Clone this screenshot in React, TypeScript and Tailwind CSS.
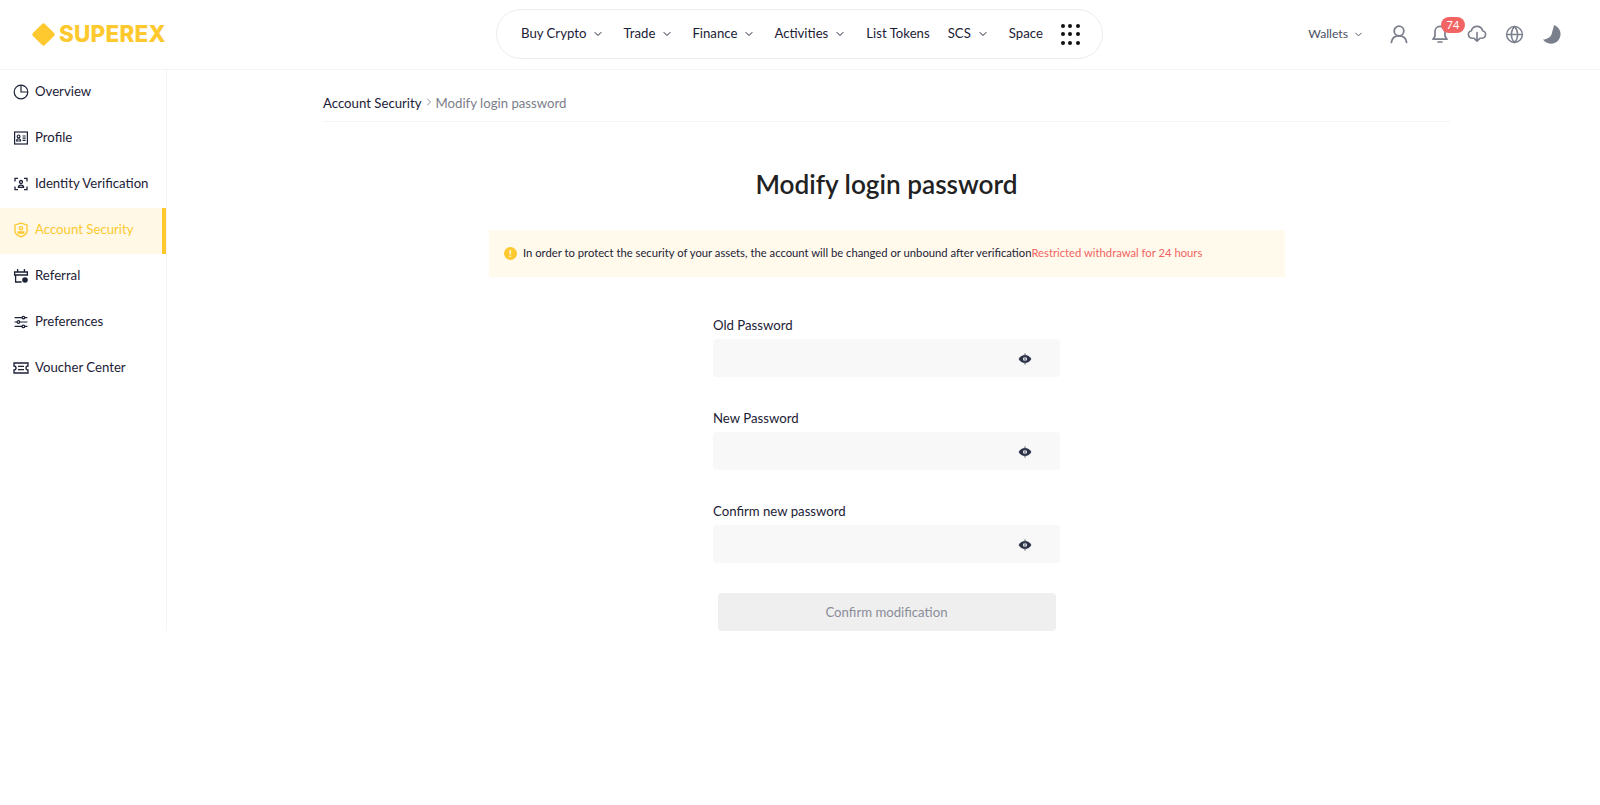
import { ChevronDown, ChevronRight, Globe } from "lucide-react";

const navItems = [
  { label: "Buy Crypto", arrow: true, gap: "mr-[19px]" },
  { label: "Trade", arrow: true, gap: "mr-[19px]" },
  { label: "Finance", arrow: true, gap: "mr-[19px]" },
  { label: "Activities", arrow: true, gap: "mr-[20px]" },
  { label: "List Tokens", arrow: false, gap: "mr-[18px]" },
  { label: "SCS", arrow: true, gap: "mr-[20px]" },
  { label: "Space", arrow: false, gap: "mr-[18px]" },
];

function PieIcon() {
  return (
    <svg width="16" height="16" viewBox="0 0 16 16" fill="none" stroke="currentColor" strokeWidth="1.200">
      <circle cx="8" cy="8" r="6.800" />
      <path d="M8 1.200V8h6.800" />
    </svg>
  );
}

function ProfileIcon() {
  return (
    <svg width="16" height="16" viewBox="0 0 16 16" fill="none" stroke="currentColor" strokeWidth="1.200">
      <rect x="1.600" y="2" width="12.800" height="12" />
      <circle cx="5.600" cy="6.400" r="1.400" />
      <path d="M3.600 11c0-3 4-3 4 0zM9.600 6h3M9.600 8.200h3M9.600 10.400h3" />
    </svg>
  );
}

function IdentityIcon() {
  return (
    <svg width="16" height="16" viewBox="0 0 16 16" fill="none" stroke="currentColor" strokeWidth="1.300">
      <path d="M5 2.400H2v3M11 2.400h3v3M5 13.600H2v-3M11 13.600h3v-3" />
      <circle cx="8" cy="6" r="1.500" />
      <path d="M5.400 11.400c0-3 5.200-3 5.200 0z" />
    </svg>
  );
}

function ShieldIcon() {
  return (
    <svg width="16" height="16" viewBox="0 0 16 16" fill="none" stroke="currentColor" strokeWidth="1.300">
      <path d="M8 1.200l6 1.800v6.200c0 2.600-3.400 4.600-6 5.600-2.600-1-6-3-6-5.600V3z" />
      <circle cx="8" cy="6.200" r="1.600" />
      <path d="M5.200 11.200h5.600V9.800H5.200z" />
    </svg>
  );
}

function ReferralIcon() {
  return (
    <svg width="16" height="16" viewBox="0 0 16 16" fill="none" stroke="currentColor" strokeWidth="1.300">
      <path d="M4.600 1v3M11.400 1v3M1.600 4h12.800v3H1.600zM2.600 7v7h6" />
      <circle cx="12" cy="12" r="2.800" fill="currentColor" stroke="none" />
    </svg>
  );
}

function SlidersIcon() {
  return (
    <svg width="16" height="16" viewBox="0 0 16 16" fill="none" stroke="currentColor" strokeWidth="1.200">
      <path d="M1.600 3.600h12.800M1.600 8h12.800M1.600 12.400h12.800" />
      <circle cx="10.400" cy="3.600" r="1.300" fill="white" />
      <circle cx="5.400" cy="8" r="1.300" fill="white" />
      <circle cx="10.400" cy="12.400" r="1.300" fill="white" />
    </svg>
  );
}

function VoucherIcon() {
  return (
    <svg width="16" height="16" viewBox="0 0 16 16" fill="none" stroke="currentColor" strokeWidth="1.300">
      <path d="M1 3h14v3a2 2 0 0 0 0 4v3H1v-3a2 2 0 0 0 0-4z" />
      <path d="M5 6.400h6M5 9.600h6" />
    </svg>
  );
}

function UserIcon() {
  return (
    <svg width="20" height="20" viewBox="0 0 20 20" fill="none" stroke="currentColor" strokeWidth="1.800" strokeLinecap="round">
      <circle cx="10" cy="7" r="4.800" />
      <path d="M2.400 18.400c.6-4.400 3.600-6.600 7.600-6.600s7 2.200 7.600 6.600" />
    </svg>
  );
}

function BellIcon() {
  return (
    <svg width="20" height="20" viewBox="0 0 20 20" fill="none" stroke="currentColor" strokeWidth="1.700" strokeLinecap="round" strokeLinejoin="round">
      <path d="M10 2.400c-3.200 0-5 2.400-5 5.200v4.600l-2 3h14l-2-3V7.600c0-2.800-1.800-5.200-5-5.200z" />
      <path d="M8 18h4" />
    </svg>
  );
}

function CloudIcon() {
  return (
    <svg width="20" height="20" viewBox="0 0 20 20" fill="none" stroke="currentColor" strokeWidth="1.600" strokeLinecap="round" strokeLinejoin="round">
      <path d="M6.200 14.200H5a3.800 3.800 0 0 1-.6-7.500 5.800 5.800 0 0 1 11.200 0A3.800 3.800 0 0 1 15 14.200h-1.200" />
      <path d="M10 8.600v8.400M7.200 14.400 10 17.200l2.800-2.800" />
    </svg>
  );
}

function MoonIcon() {
  return (
    <svg width="20" height="20" viewBox="0 0 20 20" fill="currentColor">
      <path d="M12 1A9.600 9.600 0 1 1 1 15.500C5 15.500 9 13 9.800 9.500 10.500 6.500 11.500 4 12 1z" />
    </svg>
  );
}

const sideItems = [
  { label: "Overview", icon: <PieIcon /> },
  { label: "Profile", icon: <ProfileIcon /> },
  { label: "Identity Verification", icon: <IdentityIcon /> },
  { label: "Account Security", icon: <ShieldIcon />, active: true },
  { label: "Referral", icon: <ReferralIcon /> },
  { label: "Preferences", icon: <SlidersIcon /> },
  { label: "Voucher Center", icon: <VoucherIcon /> },
];

function EyeIcon() {
  return (
    <svg width="14" height="14" viewBox="0 0 14 14" className="mt-[1px]">
      <path d="M0.600 7C2.200 4.200 4.400 3 7 3s4.800 1.200 6.400 4c-1.600 2.800-3.800 4-6.400 4S2.200 9.800 0.600 7z" fill="#2b3147" />
      <circle cx="7" cy="7" r="2" fill="#f8f8f8" />
      <path d="M7 1.400v11.200" stroke="#4a4f62" strokeWidth="1" />
    </svg>
  );
}

function PasswordField({ label, mb }: { label: string; mb: string }) {
  return (
    <div className={`w-[347px] ${mb}`}>
      <div className="text-[13.200px] leading-[14px] text-[#1c2136] mb-[7px]">{label}</div>
      <div className="h-[38px] rounded-[4px] bg-[#f8f8f8] flex items-center justify-end pr-[28px]">
        <EyeIcon />
      </div>
    </div>
  );
}

export default function App() {
  return (
    <div className="h-[805px] bg-white font-['Lato','Liberation_Sans',sans-serif] overflow-hidden">
      <header className="h-[70px] border-b border-[#f3f3f3] flex items-center pl-[32px] pr-[38px] pb-[1px]">
        <div className="flex items-center w-[464px]">
          <div className="w-[17px] h-[17px] rotate-45 bg-[#fdc92e] rounded-[2px] ml-[3px] mr-[7px]" />
          <span className="font-['Inter',sans-serif] font-extrabold text-[22.500px] tracking-[0.2px] leading-none text-[#fdc92e]">SUPEREX</span>
        </div>
        <nav className="h-[50px] w-[607px] border border-[#ececec] rounded-[25px] flex items-center pl-[24px] text-[13.200px] text-[#1c2136]">
          {navItems.map((item) => (
            <div key={item.label} className={`flex items-center ${item.gap}`}>
              <span>{item.label}</span>
              {item.arrow && <ChevronDown size={12} strokeWidth={2} className="ml-[6px]" />}
            </div>
          ))}
          <div className="grid grid-cols-3 gap-x-[3.500px] gap-y-[4.500px]">
            {Array.from({ length: 9 }).map((_, i) => (
              <span key={i} className="w-[4px] h-[4px] rounded-full bg-[#111]" />
            ))}
          </div>
        </nav>
        <div className="flex-1 flex items-center justify-end text-[#7a7f8c]">
          <span className="text-[12.200px] text-[#4b5060]">Wallets</span>
          <ChevronDown size={11} strokeWidth={2} className="ml-[5px] mr-[25px] text-[#4b5060]" />
          <UserIcon />
          <div className="relative ml-[21px] mr-[17px]">
            <BellIcon />
            <span className="absolute -top-[7px] left-[11px] h-[16px] w-[24px] rounded-full bg-[#f26464] text-white text-[11px] leading-[16px] text-center">74</span>
          </div>
          <CloudIcon />
          <Globe size={19} strokeWidth={1.800} className="ml-[18px] mr-[18px]" />
          <MoonIcon />
        </div>
      </header>
      <div className="flex">
        <aside className="w-[167px] h-[561px] border-r border-[#f5f5f5] shrink-0">
          {sideItems.map((item) => (
            <div
              key={item.label}
              className={`h-[46px] flex items-center pl-[13px] pb-[3px] gap-[6px] text-[13.200px] ${item.active ? "bg-[#fff8e6] text-[#fdc92e] border-r-4 border-[#fdc92e]" : "text-[#1c2136]"}`}
            >
              {item.icon}
              <span>{item.label}</span>
            </div>
          ))}
        </aside>
        <main className="flex-1 pl-[156px] pr-[150px]">
          <div className="h-[52px] pt-[25px] border-b border-[#f3f3f3] text-[13.200px] leading-[17px] flex items-start">
            <span className="text-[#1c2136]">Account Security</span>
            <ChevronRight size={12} strokeWidth={1.500} className="text-[#666a78] ml-[1px] mt-[1px]" />
            <span className="text-[#7b7e8a] ml-[1px]">Modify login password</span>
          </div>
          <h1 className="text-[26.200px] leading-[34px] font-semibold text-[#222] text-center mt-[45px]">Modify login password</h1>
          <div className="ml-[166px] mr-[165px] h-[47px] mt-[29px] bg-[#fffaeb] flex items-center pl-[15px] text-[11.250px] text-[#1c2136]">
            <span className="w-[13px] h-[13px] rounded-full bg-[#fdc92e] text-white text-[10px] font-bold leading-[13px] text-center mr-[6px]">!</span>
            <span>In order to protect the security of your assets, the account will be changed or unbound after verification</span>
            <span className="text-[#f26464]">Restricted withdrawal for 24 hours</span>
          </div>
          <div className="flex flex-col items-center pt-[41px]">
            <PasswordField label="Old Password" mb="mb-[34px]" />
            <PasswordField label="New Password" mb="mb-[34px]" />
            <PasswordField label="Confirm new password" mb="mb-[30px]" />
            <button className="w-[338px] h-[38px] pt-[2px] rounded-[4px] bg-[#efefef] text-[#8a8d99] text-[13.200px]">Confirm modification</button>
          </div>
        </main>
      </div>
    </div>
  );
}
